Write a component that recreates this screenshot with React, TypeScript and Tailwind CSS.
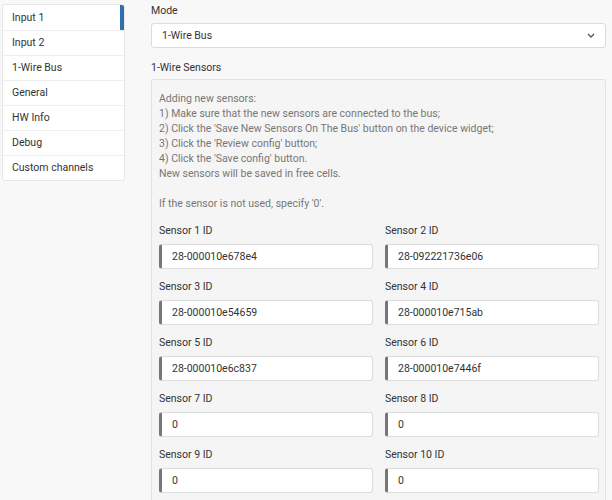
import React from "react";

const tabs = ["Input 1", "Input 2", "1-Wire Bus", "General", "HW Info", "Debug", "Custom channels"];

const sensors = [
  "28-000010e678e4",
  "28-092221736e06",
  "28-000010e54659",
  "28-000010e715ab",
  "28-000010e6c837",
  "28-000010e7446f",
  "0",
  "0",
  "0",
  "0",
];

const notes = [
  "Adding new sensors:",
  "1) Make sure that the new sensors are connected to the bus;",
  "2) Click the 'Save New Sensors On The Bus' button on the device widget;",
  "3) Click the 'Review config' button;",
  "4) Click the 'Save config' button.",
  "New sensors will be saved in free cells.",
  "",
  "If the sensor is not used, specify '0'.",
];

function Sidebar() {
  return (
    <aside className="ml-[2px] mt-[4px] w-[123px] shrink-0 self-start overflow-hidden rounded-[3px] border border-[#e6e6e6] bg-white">
      {tabs.map((t, i) => (
        <div
          key={t}
          className={
            "relative flex h-[25px] items-center px-[9px] text-[10.5px] text-[#333] " +
            (i > 0 ? "border-t border-[#eeeeee]" : "")
          }
        >
          {t}
          {i === 0 && <span className="absolute right-0 top-0 h-[25px] w-[4px] bg-[#2f6fb0]" />}
        </div>
      ))}
    </aside>
  );
}

function SensorField({ index, value }: { index: number; value: string }) {
  return (
    <div className="flex flex-col">
      <label className="h-[15px] text-[10.5px] leading-[15px] text-[#333]">Sensor {index} ID</label>
      <div className="mt-[6px] flex h-[25px] items-center rounded-[3px] border border-l-[3px] border-[#dcdcdc] border-l-[#777777] bg-white pl-[10px] text-[10.5px] text-[#333]">
        {value}
      </div>
    </div>
  );
}

export default function App() {
  return (
    <div className="flex h-[500px] w-[612px] overflow-hidden bg-[#f8f8f8] font-['Roboto',sans-serif]">
      <Sidebar />
      <main className="ml-[26px] mr-[6px] flex min-w-0 flex-1 flex-col pt-[3px]">
        <div className="h-[15px] text-[10.5px] leading-[15px] text-[#333]">Mode</div>
        <div className="mt-[5px] flex h-[25px] items-center justify-between rounded-[3px] border border-[#dcdcdc] bg-white pl-[10px] pr-[10px] text-[10.5px] text-[#333]">
          <span>1-Wire Bus</span>
          <svg width="8" height="5" viewBox="0 0 8 5" fill="none">
            <path d="M1 1l3 3 3-3" stroke="#555" strokeWidth="1.3" />
          </svg>
        </div>
        <div className="mt-[12px] h-[15px] text-[10.5px] leading-[15px] text-[#333]">1-Wire Sensors</div>
        <section className="mt-[4px] flex-1 rounded-t-[3px] border border-b-0 border-[#e2e2e2] bg-[#f5f5f5] pl-[7px] pr-[6px] pt-[11px]">
          <div className="text-[10.5px] leading-[15px] text-[#777]">
            {notes.map((n, i) => (
              <div key={i} className="h-[15px]">
                {n}
              </div>
            ))}
          </div>
          <div className="mt-[12px] grid grid-cols-2 gap-x-[12px] gap-y-[10px]">
            {sensors.map((s, i) => (
              <SensorField key={i} index={i + 1} value={s} />
            ))}
          </div>
        </section>
      </main>
    </div>
  );
}
